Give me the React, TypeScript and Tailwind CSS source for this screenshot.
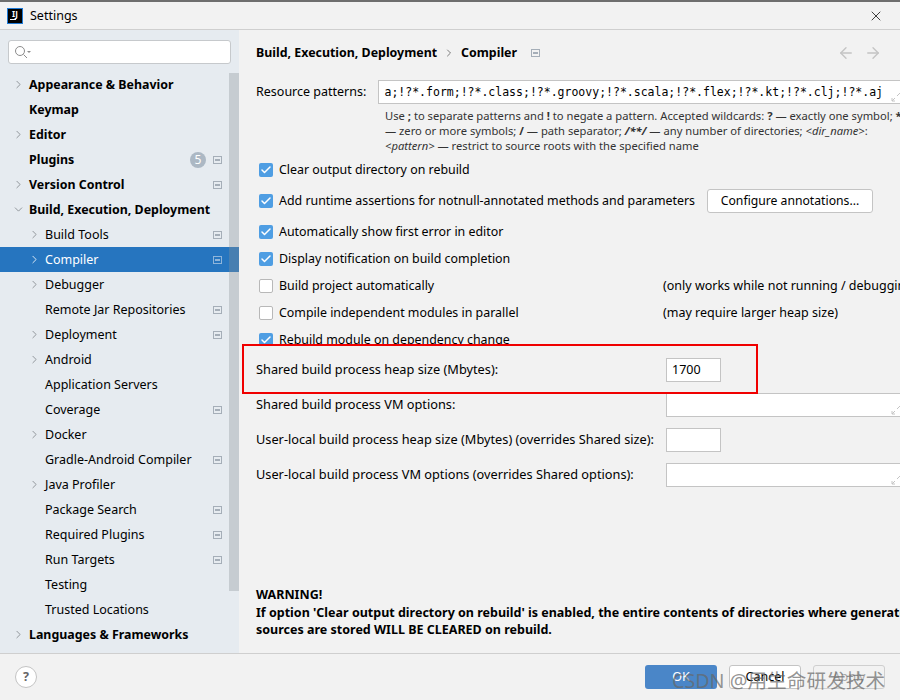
import React from 'react';
import { ChevronRight, ChevronDown, Check, X, ArrowLeft, ArrowRight } from 'lucide-react';

const tree = [
  { label: 'Appearance & Behavior', bold: true, arrow: 'right' },
  { label: 'Keymap', bold: true },
  { label: 'Editor', bold: true, arrow: 'right' },
  { label: 'Plugins', bold: true, badge: true, marker: true },
  { label: 'Version Control', bold: true, arrow: 'right', marker: true },
  { label: 'Build, Execution, Deployment', bold: true, arrow: 'down' },
  { label: 'Build Tools', arrow: 'right', marker: true },
  { label: 'Compiler', arrow: 'right', marker: true, selected: true },
  { label: 'Debugger', arrow: 'right' },
  { label: 'Remote Jar Repositories', marker: true },
  { label: 'Deployment', arrow: 'right', marker: true },
  { label: 'Android', arrow: 'right' },
  { label: 'Application Servers' },
  { label: 'Coverage', marker: true },
  { label: 'Docker', arrow: 'right' },
  { label: 'Gradle-Android Compiler', marker: true },
  { label: 'Java Profiler', arrow: 'right' },
  { label: 'Package Search', marker: true },
  { label: 'Required Plugins', marker: true },
  { label: 'Run Targets', marker: true },
  { label: 'Testing' },
  { label: 'Trusted Locations' },
  { label: 'Languages & Frameworks', bold: true, arrow: 'right' },
];

function Marker({ selected }: { selected?: boolean }) {
  return (
    <span className={`flex h-[8px] w-[9px] items-center justify-center border ${selected ? 'border-[#8fb5da]' : 'border-[#a5aeb8]'}`}>
      <span className={`h-[2px] w-[5px] ${selected ? 'bg-[#8fb5da]' : 'bg-[#a5aeb8]'}`} />
    </span>
  );
}

function TreeRow({ item }: { item: any }) {
  const left = item.bold ? 'pl-[13px]' : 'pl-[29px]';
  return (
    <div className={`flex h-[25px] items-center pr-[17px] ${left} ${item.selected ? 'bg-[#2675bf] text-white' : 'text-black'}`}>
      <span className="flex w-[16px] shrink-0 items-center">
        {item.arrow === 'right' && <ChevronRight size={13} strokeWidth={1.5} className={`-ml-[1px] ${item.selected ? 'text-white' : 'text-[#7f8489]'}`} />}
        {item.arrow === 'down' && <ChevronDown size={13} strokeWidth={1.5} className="-ml-[1px] text-[#7f8489]" />}
      </span>
      <span className={`flex-1 whitespace-nowrap ${item.bold ? 'text-[12.4px] font-bold' : ''}`}>{item.label}</span>
      {item.badge && (
        <span className="mr-[7px] flex h-[16px] w-[16px] items-center justify-center rounded-full bg-[#acb8c4] text-[12px] text-white">5</span>
      )}
      {item.marker && <Marker selected={item.selected} />}
    </div>
  );
}

function CheckRow({ label, checked, className = 'h-[27px]' }: { label: string; checked?: boolean; className?: string }) {
  return (
    <div className={`flex items-center pl-[3px] ${className}`}>
      {checked ? (
        <span className="flex h-[14px] w-[14px] shrink-0 items-center justify-center rounded-[2px] bg-[#4f9ee3]">
          <Check size={12} strokeWidth={3} className="text-white" />
        </span>
      ) : (
        <span className="h-[14px] w-[14px] shrink-0 rounded-[2px] border border-[#b8b8b8] bg-white" />
      )}
      <span className="ml-[6px] text-[12.4px] whitespace-nowrap">{label}</span>
    </div>
  );
}

function Expand() {
  return (
    <svg width="10" height="10" viewBox="0 0 10 10" className="absolute right-[4px] bottom-[1px] text-[#c4c4c4]" fill="none" stroke="currentColor">
      <path d="M1 9 L4 6 M1 9 V6 M1 9 H4" />
      <path d="M9 1 L6 4" />
    </svg>
  );
}

function FieldRow({ label, value, wide, className = '' }: { label: string; value?: string; wide?: boolean; className?: string }) {
  return (
    <div className={`flex h-[24px] items-center ${className}`}>
      <span className="-mt-[2px] w-[410px] shrink-0 text-[12.75px] whitespace-nowrap">{label}</span>
      <div className={`relative flex h-[24px] shrink-0 items-center border border-[#c4c4c4] bg-white pl-[5px] ${wide ? 'w-[240px]' : 'w-[55px]'}`}>
        {value}
        {wide && <Expand />}
      </div>
    </div>
  );
}

export default function App() {
  return (
    <div className="relative flex h-[700px] w-[900px] flex-col overflow-hidden border-t-2 border-[#6e6e6e] bg-[#f2f2f2] font-['Noto_Sans','Open_Sans',sans-serif] text-[12.5px] leading-[18px] text-black">
      {/* title bar */}
      <div className="flex h-[28px] shrink-0 items-center border-b border-[#cfcfcf] pr-[16px] pl-[7px]">
        <span className="flex h-[16px] w-[16px] flex-col items-center border border-[#1f7ad6] bg-black pt-[1px] text-[8px] leading-[8px] font-bold text-white">
          IJ
          <span className="mt-[1px] ml-[2px] h-[1px] w-[6px] self-start bg-white" />
        </span>
        <span className="ml-[7px] flex-1">Settings</span>
        <X size={16} strokeWidth={1.3} className="text-[#222]" />
      </div>

      <div className="flex min-h-0 flex-1">
        {/* sidebar */}
        <div className="relative w-[239px] shrink-0 overflow-hidden bg-[#e6ebf0]">
          <div className="mx-[8px] mt-[10px] mb-[8px] flex h-[24px] items-center rounded-[3px] border border-[#c6c9cc] bg-white pl-[5px]">
            <svg width="17" height="14" viewBox="0 0 17 14" fill="none" stroke="#8c8c8c">
              <circle cx="6" cy="6" r="4.5" />
              <path d="M9.5 9.5 L13 13" />
              <path d="M13 6 H17 L15 8 Z" fill="#8c8c8c" stroke="none" />
            </svg>
          </div>
          {tree.map(item => <TreeRow key={item.label} item={item} />)}
          <div className="absolute top-[43px] right-0 h-[518px] w-[10px] bg-[#8a9199]/35" />
        </div>

        {/* content */}
        <div className="min-w-0 flex-1 overflow-hidden pl-[17px]">
          <div className="flex h-[44px] items-center pt-[1px] text-[12.4px] font-bold whitespace-nowrap">
            <span>Build, Execution, Deployment</span>
            <ChevronRight size={12} strokeWidth={1.5} className="mx-[6px] text-[#555]" />
            <span>Compiler</span>
            <span className="ml-[14px]"><Marker /></span>
            <span className="ml-auto flex gap-[9px] pr-[18px] text-[#c4c4c4]">
              <ArrowLeft size={18} strokeWidth={1.8} />
              <ArrowRight size={18} strokeWidth={1.8} />
            </span>
          </div>

          <div className="mt-[6px] flex h-[24px] items-center">
            <span className="w-[122px] shrink-0">Resource patterns:</span>
            <div className="relative flex h-[24px] w-[528px] shrink-0 items-center border border-[#c4c4c4] bg-white pr-[22px] font-['DejaVu_Sans_Mono',monospace] text-[11.5px] whitespace-nowrap">
              <div className="ml-[5px] flex min-w-0 flex-1 justify-end overflow-hidden">
                a;!?*.form;!?*.class;!?*.groovy;!?*.scala;!?*.flex;!?*.kt;!?*.clj;!?*.aj
              </div>
              <Expand />
            </div>
          </div>

          <div className="mt-[4px] ml-[129px] w-[560px] text-[11.2px] leading-[15px] whitespace-nowrap text-[#333]">
            <div>Use <b>;</b> to separate patterns and <b>!</b> to negate a pattern. Accepted wildcards: <b>?</b> — exactly one symbol; <b>*</b></div>
            <div>— zero or more symbols; <b>/</b> — path separator; <b><i>/**/</i></b> — any number of directories; <i>&lt;dir_name&gt;</i>:</div>
            <div><i>&lt;pattern&gt;</i> — restrict to source roots with the specified name</div>
          </div>

          <div className="mt-[1px]">
            <CheckRow checked label="Clear output directory on rebuild" className="h-[31px]" />
            <div className="flex h-[31px] items-center">
              <CheckRow checked label="Add runtime assertions for notnull-annotated methods and parameters" className="h-[31px] w-[451px] shrink-0" />
              <button className="h-[24px] w-[166px] shrink-0 rounded-[3px] border border-[#c4c4c4] bg-white text-[12.2px]">Configure annotations...</button>
            </div>
            <CheckRow checked label="Automatically show first error in editor" className="h-[31px]" />
            <CheckRow checked label="Display notification on build completion" className="-mt-[2px] h-[27px]" />
            <div className="flex h-[27px] items-center">
              <CheckRow label="Build project automatically" className="h-[27px] w-[407px] shrink-0" />
              <span className="whitespace-nowrap">(only works while not running / debugging)</span>
            </div>
            <div className="flex h-[27px] items-center">
              <CheckRow label="Compile independent modules in parallel" className="h-[27px] w-[407px] shrink-0" />
              <span className="whitespace-nowrap">(may require larger heap size)</span>
            </div>
            <div className="h-[20px] overflow-hidden">
              <CheckRow checked label="Rebuild module on dependency change" className="h-[27px]" />
            </div>
          </div>

          <FieldRow label="Shared build process heap size (Mbytes):" value="1700" className="mt-[12px]" />
          <FieldRow label="Shared build process VM options:" wide className="mt-[11px]" />
          <FieldRow label="User-local build process heap size (Mbytes) (overrides Shared size):" className="mt-[11px]" />
          <FieldRow label="User-local build process VM options (overrides Shared options):" wide className="mt-[11px]" />

          <div className="mt-[99px] text-[12.5px] leading-[17.5px] font-bold whitespace-nowrap">
            <div>WARNING!</div>
            <div>If option 'Clear output directory on rebuild' is enabled, the entire contents of directories where generated</div>
            <div>sources are stored WILL BE CLEARED on rebuild.</div>
          </div>
        </div>
      </div>

      {/* bottom bar */}
      <div className="flex h-[47px] shrink-0 items-center border-t border-[#cfcfcf] pr-[15px] pl-[15px]">
        <span className="flex h-[22px] w-[22px] items-center justify-center rounded-full border border-[#c4c4c4] bg-white font-bold text-[#666]">?</span>
        <span className="flex-1" />
        <div className="flex gap-[12px]">
          <button className="h-[24px] w-[72px] rounded-[3px] bg-[#4a86c8] text-white">OK</button>
          <button className="h-[24px] w-[72px] rounded-[3px] border border-[#c4c4c4] bg-white">Cancel</button>
          <button className="h-[24px] w-[72px] rounded-[3px] border border-[#cfcfcf] text-[#a8a8a8]">Apply</button>
        </div>
      </div>

      {/* highlight drawn on the screenshot */}
      <div className="absolute top-[342px] left-[242px] h-[50px] w-[516px] border-2 border-[#f00000]" />
      {/* watermark */}
      <div className="absolute top-[666px] left-[672px] font-['Noto_Sans','Noto_Sans_CJK_SC',sans-serif] text-[19.7px] leading-[26px] whitespace-nowrap text-[#666]/70">
        CSDN @用生命研发技术
      </div>
    </div>
  );
}
